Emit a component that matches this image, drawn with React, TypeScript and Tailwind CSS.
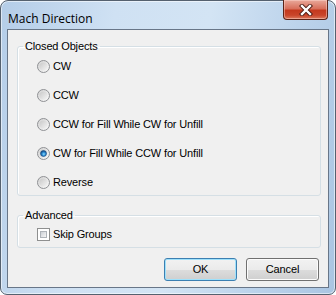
import React from 'react';

const body = "font-['Liberation_Sans',Arial,sans-serif] text-[11px] tracking-[-0.15px] text-black";

const Radio: React.FC<{ checked?: boolean; id: string }> = ({ checked, id }) => (
  <svg width="13" height="13" viewBox="0 0 13 13" className="shrink-0">
    <defs>
      <linearGradient id={`rf-${id}`} x1="0" y1="0" x2="1" y2="1">
        <stop offset="0" stopColor="#d2d2d2" />
        <stop offset="1" stopColor="#fbfbfb" />
      </linearGradient>
      <linearGradient id={`ri-${id}`} x1="0" y1="0" x2="1" y2="1">
        <stop offset="0" stopColor="#c9c9c9" />
        <stop offset="1" stopColor="#f4f4f4" />
      </linearGradient>
      <radialGradient id={`rd-${id}`} cx="0.55" cy="0.6" r="0.6">
        <stop offset="0" stopColor="#8be0ff" />
        <stop offset="0.5" stopColor="#2a86cf" />
        <stop offset="1" stopColor="#0c3f75" />
      </radialGradient>
    </defs>
    <circle cx="6.5" cy="6.5" r="6" fill={`url(#rf-${id})`} stroke="#8f9194" strokeWidth="1" />
    <circle cx="6.5" cy="6.5" r="4" fill={`url(#ri-${id})`} />
    {checked && <circle cx="6.5" cy="6.5" r="3" fill={`url(#rd-${id})`} stroke="#1c4f86" strokeWidth="0.6" />}
  </svg>
);

const options = [
  { label: 'CW', checked: false },
  { label: 'CCW', checked: false },
  { label: 'CCW for Fill While CW for Unfill', checked: false },
  { label: 'CW for Fill While CCW for Unfill', checked: true },
  { label: 'Reverse', checked: false },
];

const MachDirectionDialog: React.FC = () => {
  return (
    <div className="relative w-[336px] h-[295px] flex flex-col rounded-t-[8px] rounded-b-[7px] border border-[#55616f] shadow-[inset_0_0_0_1px_rgba(255,255,255,0.55)] bg-[linear-gradient(100deg,#b4cde8_0%,#cfe1f3_30%,#d3e4f4_55%,#bcd3eb_78%,#aac5e2_100%)] px-[6px] pb-[6px]">
      {/* Title bar */}
      <div className="h-[28px] shrink-0 pl-[1px] pt-[4px]">
        <span className="font-['Open_Sans','Noto_Sans',sans-serif] text-[12px] leading-[18px] text-black">
          Mach Direction
        </span>
      </div>

      {/* Close button */}
      <button className="absolute -top-px right-[7px] w-[45px] h-[20px] rounded-b-[4px] border border-[#5b2318] border-t-0 bg-[linear-gradient(to_bottom,#e9a99b_0%,#d8705c_45%,#c4391e_55%,#c9452a_80%,#dc7a5e_100%)] shadow-[inset_0_0_0_1px_rgba(255,220,210,0.45)] flex items-center justify-center">
        <svg width="14" height="12" viewBox="0 0 14 12">
          <path d="M3 2 L11 10 M11 2 L3 10" stroke="#4a1a12" strokeWidth="4.2" strokeLinecap="square" />
          <path d="M3 2 L11 10 M11 2 L3 10" stroke="#ffffff" strokeWidth="2.4" strokeLinecap="square" />
        </svg>
      </button>

      {/* Client area */}
      <div className={`flex-1 flex flex-col border border-[#687688] bg-[#f0f0f0] ${body}`}>
        {/* Closed Objects */}
        <fieldset className="mt-[10px] ml-[9px] mr-[7px] rounded-[3px] border border-[#d5dfe5] shadow-[inset_1px_1px_0_#ffffff] pb-[6px]">
          <legend className="ml-[5px] px-[2px] leading-[13px]">Closed Objects</legend>
          <div className="flex flex-col gap-[16px] pt-[7px] pl-[19px]">
            {options.map((o, i) => (
              <label key={o.label} className="flex items-center gap-[3px] h-[13px] leading-[13px]">
                <Radio checked={o.checked} id={`r${i}`} />
                <span>{o.label}</span>
              </label>
            ))}
          </div>
        </fieldset>

        {/* Advanced */}
        <fieldset className="mt-[13px] ml-[9px] mr-[7px] rounded-[3px] border border-[#d5dfe5] shadow-[inset_1px_1px_0_#ffffff] pb-[6px]">
          <legend className="ml-[5px] px-[2px] leading-[13px]">Advanced</legend>
          <label className="flex items-center gap-[3px] h-[13px] pt-0 mt-[6px] pl-[19px] leading-[13px]">
            <span className="w-[13px] h-[13px] shrink-0 border border-[#8e8f8f] bg-white p-[2px]">
              <span className="block w-full h-full border border-[#aeb3b9] bg-[linear-gradient(135deg,#cbcfd5_0%,#f6f6f6_100%)]" />
            </span>
            <span>Skip Groups</span>
          </label>
        </fieldset>

        {/* Buttons */}
        <div className="flex justify-end gap-[9px] mt-[10px] pr-[9px]">
          <button className="w-[73px] h-[23px] rounded-[3px] border border-[#3c7fb1] shadow-[inset_0_0_0_1px_#9fe1fb] bg-[linear-gradient(to_bottom,#f2f2f2_0%,#ebebeb_50%,#dddddd_50%,#cfcfcf_100%)] leading-[21px]">
            OK
          </button>
          <button className="w-[73px] h-[23px] rounded-[3px] border border-[#707070] shadow-[inset_0_0_0_1px_#fcfcfc] bg-[linear-gradient(to_bottom,#f2f2f2_0%,#ebebeb_50%,#dddddd_50%,#cfcfcf_100%)] leading-[21px]">
            Cancel
          </button>
        </div>
      </div>
    </div>
  );
};

export default function App() {
  return <MachDirectionDialog />;
}
